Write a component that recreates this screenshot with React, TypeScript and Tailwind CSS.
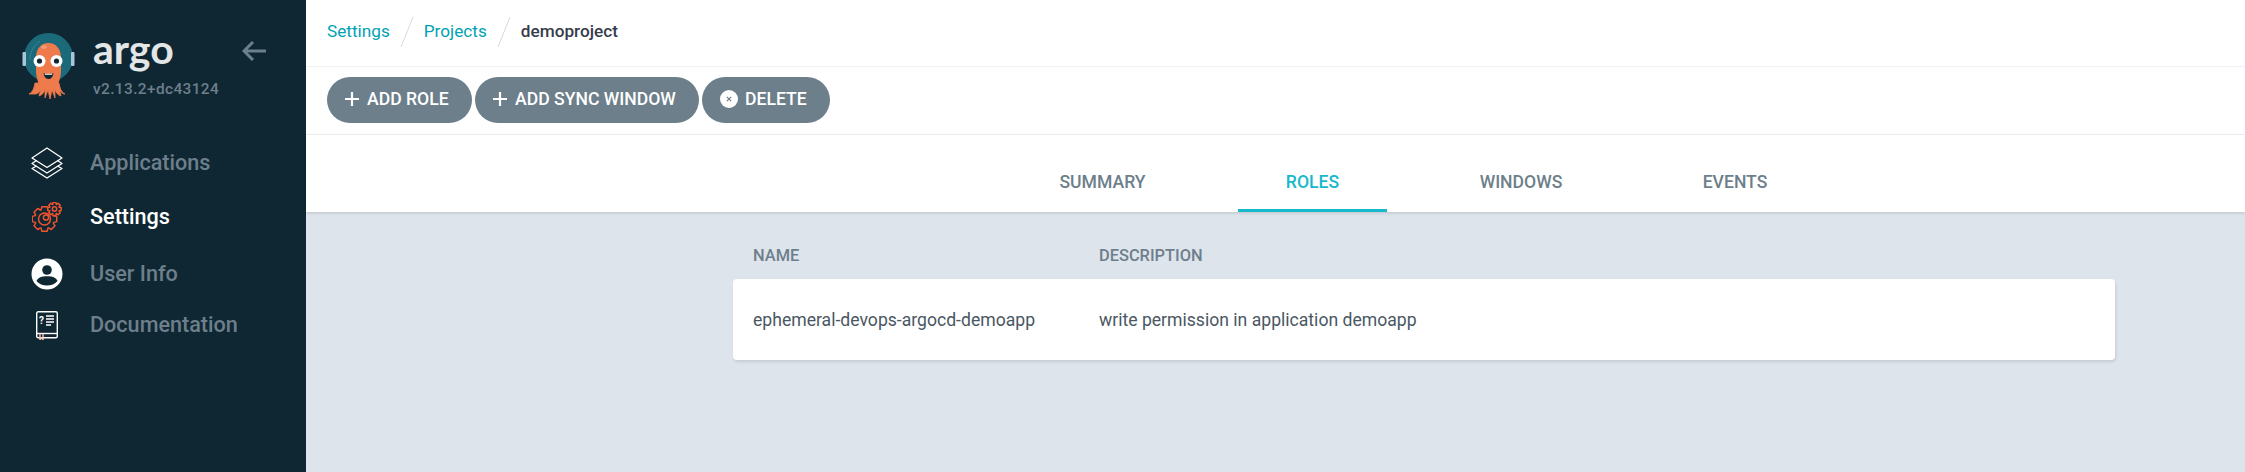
import React from 'react';

const gearPath = (cx: number, cy: number, ro: number, ri: number, teeth: number) => {
  const pts: string[] = [];
  const step = (Math.PI * 2) / teeth;
  for (let i = 0; i < teeth; i++) {
    const a = i * step - Math.PI / 2;
    const corners: [number, number][] = [
      [ri, -0.5],
      [ro, -0.3],
      [ro, 0.3],
      [ri, 0.5],
    ];
    corners.forEach(([r, f]) => {
      const t = a + f * step * 0.9;
      pts.push(`${(cx + r * Math.cos(t)).toFixed(2)} ${(cy + r * Math.sin(t)).toFixed(2)}`);
    });
  }
  return `M${pts.join('L')}Z`;
};

const ArgoLogo = () => (
  <svg viewBox="19 30 60 76" className="w-[60px] h-[76px] shrink-0">
    <circle cx="48.5" cy="57.5" r="24.5" fill="#1b6a7a" />
    <path d="M30 60a19 21 0 0 1 10-19" fill="none" stroke="#3f8794" strokeWidth="0.8" />
    <rect x="22.5" y="52" width="3.5" height="14" rx="1" fill="#a9c6d8" />
    <rect x="71" y="52" width="3.5" height="14" rx="1" fill="#a9c6d8" />
    <path d="M35 94c3 0 5-2 6-6l-2 8c3-1 5-3 6-7l0 9 3-8 2 9 2-9 3 8 0-9c1 4 3 6 6 7l-2-8c1 4 3 6 6 6-4-2-5-6-6-11l-24 0c-1 5-2 9-6 11z" fill="#ef7b4d" stroke="#ef7b4d" strokeWidth="0.8" strokeLinejoin="round" />
    <path d="M36 58c0-9 5-15 12.500-15s12.500 6 12.500 15v13c0 7-3 13-4 16H40c-1-3-4-9-4-16z" fill="#ef7b4d" />
    <ellipse cx="44" cy="47" rx="3" ry="1.800" fill="#f59a74" />
    <circle cx="39.500" cy="61" r="6" fill="#fff" />
    <circle cx="56.500" cy="61" r="6" fill="#fff" />
    <circle cx="39.500" cy="61" r="2.600" fill="#0f2733" />
    <circle cx="56.500" cy="61" r="2.600" fill="#0f2733" />
    <path d="M43.500 73c3 1.200 7 1.200 10 0-.5 4-2.500 6-5 6s-4.500-2-5-6z" fill="#0f2733" />
    <path d="M44.500 73.400c2.500.6 5.500.6 8 0l-.4 1.400h-7.200z" fill="#fff" />
  </svg>
);

const LayersIcon = () => (
  <svg viewBox="0 0 32 32" className="w-8 h-8" fill="none" stroke="#fff" strokeWidth="1.300" strokeLinejoin="round">
    <path d="M16 1 31 11 16 20.500 1 11z" />
    <path d="M5.500 13.500 1 16.500 16 26 31 16.500 26.500 13.500" />
    <path d="M5.500 19 1 21.500 16 31 31 21.500 26.500 19" />
  </svg>
);

const SettingsIcon = () => (
  <svg viewBox="0 0 30 30" className="w-[30px] h-[30px]" fill="none" stroke="#f0532f" strokeWidth="1.500" strokeLinejoin="round">
    <path d={gearPath(12.500, 17, 12.500, 9.800, 8)} />
    <circle cx="12.500" cy="17" r="6" />
    <circle cx="14" cy="15.500" r="2.600" />
    <path d={gearPath(22.500, 7, 6.800, 5, 8)} fill="#0f2733" />
    <circle cx="22.500" cy="7" r="2.200" />
  </svg>
);

const UserIcon = () => (
  <svg viewBox="0 0 32 32" className="w-8 h-8">
    <circle cx="16" cy="16" r="15.500" fill="#fff" />
    <circle cx="16" cy="12" r="4.800" fill="#0f2733" />
    <path d="M5.500 23c1.500-3.500 5-4.800 10.500-4.800S25 19.500 26.500 23c-2.500 3-6.500 4.500-10.500 4.500S8 26 5.500 23z" fill="#0f2733" />
  </svg>
);

const DocIcon = () => (
  <svg viewBox="0 0 22 29" className="w-[22px] h-[29px]" fill="none" stroke="#fff" strokeWidth="1.400">
    <rect x="0.700" y="0.700" width="20.600" height="26" rx="1.500" />
    <path d="M0.700 22.500h20.600" />
    <path d="M10 5h8M10 8h8M10 11h8M10 14h5" />
    <path d="M4 22.500v6l1.500-1.500 1.500 1.500v-6" stroke="#f7c9b5" />
    <text x="3" y="12.500" fill="#fff" stroke="none" fontSize="10" fontWeight="700" fontFamily="Roboto, sans-serif">?</text>
  </svg>
);

const navItems = [
  { label: 'Applications', icon: <LayersIcon />, row: 'h-[54px]', text: 'text-[#6d7f8b]' },
  { label: 'Settings', icon: <SettingsIcon />, row: 'h-[54px]', text: 'text-white' },
  { label: 'User Info', icon: <UserIcon />, row: 'h-[60px]', text: 'text-[#6d7f8b]' },
  { label: 'Documentation', icon: <DocIcon />, row: 'h-[42px]', text: 'text-[#6d7f8b]' },
];

const Plus = () => (
  <svg viewBox="0 0 14 14" className="w-[14px] h-[14px] mr-[8px]" stroke="#fff" strokeWidth="2.200">
    <path d="M7 0v14M0 7h14" />
  </svg>
);

const TimesCircle = () => (
  <svg viewBox="0 0 18 18" className="w-[18px] h-[18px] mr-[7px]">
    <circle cx="9" cy="9" r="9" fill="#fff" />
    <path d="M6.800 6.800l4.400 4.400M11.200 6.800l-4.400 4.400" stroke="#6d7f8b" strokeWidth="1.200" />
  </svg>
);

const Slash = () => (
  <svg viewBox="0 0 14 30" className="w-[14px] h-[30px] mx-[10px]" stroke="#d5dbe0" strokeWidth="1">
    <path d="M13 0 1 30" />
  </svg>
);

const tabs = [
  { label: 'SUMMARY', style: 'w-[181px] text-[#6d7f8b] border-transparent' },
  { label: 'ROLES', style: 'w-[149px] text-[#18b8cc] border-[#18b8cc]' },
  { label: 'WINDOWS', style: 'w-[178px] text-[#6d7f8b] border-transparent' },
  { label: 'EVENTS', style: 'w-[160px] text-[#6d7f8b] border-transparent' },
];

export default function App() {
  return (
    <div className="flex h-[472px] w-[2245px] overflow-hidden bg-[#dee4eb] font-['Roboto',sans-serif]">
      <aside className="w-[306px] shrink-0 bg-[#0f2733]">
        <div className="flex h-[136px] pl-[19px] pt-[30px]">
          <ArgoLogo />
          <div className="ml-[14px] w-[135px]">
            <div className="h-[50px] text-[41px] leading-[38px] font-bold text-[#e3e6e6] font-['Lato',sans-serif]">argo</div>
            <div className="text-[15.400px] leading-[18px] font-medium tracking-[0.4px] text-[#6d7f8b]">v2.13.2+dc43124</div>
          </div>
          <svg viewBox="0 0 24 20" className="ml-[14px] mt-[11px] h-[20px] w-[24px]" fill="none" stroke="#6d7f8b" strokeWidth="3">
            <path d="M24 10H2M11 1 2 10l9 9" />
          </svg>
        </div>
        <nav>
          {navItems.map((item) => (
            <div key={item.label} className={`flex items-center ${item.row}`}>
              <div className="flex w-[90px] justify-center pl-[4px]">{item.icon}</div>
              <span className={`text-[21.600px] font-medium ${item.text}`}>{item.label}</span>
            </div>
          ))}
        </nav>
      </aside>
      <main className="min-w-0 flex-1">
        <div className="flex h-[67px] items-center border-b border-[#f0f2f4] bg-white pb-[3px] pl-[21px] text-[17.200px]">
          <span className="text-[#00a2b3]">Settings</span>
          <Slash />
          <span className="text-[#00a2b3]">Projects</span>
          <Slash />
          <span className="font-medium text-[#363c4a]">demoproject</span>
        </div>
        <div className="flex h-[68px] items-start gap-[3px] border-b border-[#f0f2f4] bg-white pl-[21px] pt-[10px]">
          <button className="flex h-[46px] w-[145px] items-center rounded-[23px] bg-[#6d7f8b] pb-[2px] pl-[18px] text-[17.600px] font-medium text-white">
            <Plus />
            ADD ROLE
          </button>
          <button className="flex h-[46px] w-[224px] items-center rounded-[23px] bg-[#6d7f8b] pb-[2px] pl-[18px] text-[17.600px] font-medium text-white">
            <Plus />
            ADD SYNC WINDOW
          </button>
          <button className="flex h-[46px] w-[128px] items-center rounded-[23px] bg-[#6d7f8b] pb-[2px] pl-[18px] text-[17.600px] font-medium text-white">
            <TimesCircle />
            DELETE
          </button>
        </div>
        <div className="flex h-[77px] gap-[45px] bg-white pl-[706px] shadow-[0_1px_3px_rgba(0,0,0,0.15)]">
          {tabs.map((tab) => (
            <div key={tab.label} className={`flex h-full items-center justify-center border-b-[3px] pt-[20px] text-[17.600px] font-medium ${tab.style}`}>
              {tab.label}
            </div>
          ))}
        </div>
        <div className="ml-[427px] w-[1382px]">
          <div className="flex h-[67px] items-end pb-[10px] pl-[20px] text-[16.400px] font-medium text-[#6d7f8b]">
            <div className="w-[346px]">NAME</div>
            <div>DESCRIPTION</div>
          </div>
          <div className="flex h-[81px] items-center rounded-[4px] bg-white pl-[20px] pt-[1px] text-[17.600px] text-[#495763] shadow-[1px_2px_3px_rgba(0,0,0,0.1)]">
            <div className="w-[346px]">ephemeral-devops-argocd-demoapp</div>
            <div>write permission in application demoapp</div>
          </div>
        </div>
      </main>
    </div>
  );
}
